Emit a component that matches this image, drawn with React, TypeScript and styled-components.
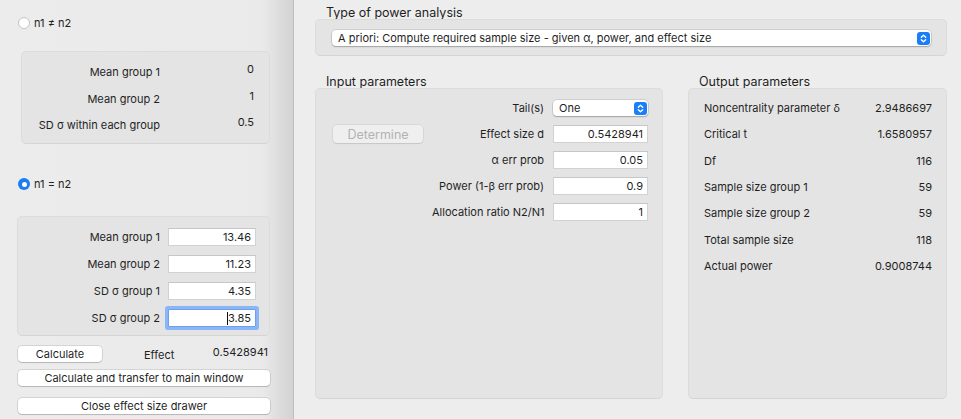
import React from "react";
import styled, { createGlobalStyle, css } from "styled-components";

const GlobalStyle = createGlobalStyle`
  html, body { margin: 0; padding: 0; }
  body {
    background: #ededed;
    font-family: Inter, "Liberation Sans", sans-serif;
    font-size: 11px;
    color: #1f1f1f;
  }
  * { box-sizing: border-box; }
`;

const Window = styled.div`
  display: flex;
  width: 961px;
  height: 419px;
  overflow: hidden;
  background: #ededed;
`;

const Drawer = styled.div`
  width: 294px;
  flex: none;
  border-right: 1px solid #bdbdbd;
  background: linear-gradient(to right, #ececec 0, #eaeaea 262px, #d2d2d2 293px);
  display: flex;
  flex-direction: column;
  padding: 16px 0 0 17px;
`;

const RadioRow = styled.div<{ $mt: number }>`
  display: flex;
  align-items: center;
  gap: 4px;
  height: 14px;
  margin-top: ${(p) => p.$mt}px;
  margin-left: 1px;
`;

const RadioDot = styled.span<{ $on?: boolean }>`
  width: 12px;
  height: 12px;
  border-radius: 50%;
  flex: none;
  display: flex;
  align-items: center;
  justify-content: center;
  background: ${(p) => (p.$on ? "#1b7cf5" : "#fff")};
  border: ${(p) => (p.$on ? "none" : "1px solid #c4c4c4")};
  &::after {
    content: "";
    width: 5px;
    height: 5px;
    border-radius: 50%;
    background: #fff;
    display: ${(p) => (p.$on ? "block" : "none")};
  }
`;

const GroupBox = styled.div`
  background: #e4e4e4;
  border: 1px solid #dcdcdc;
  border-bottom-color: #d4d4d4;
  border-radius: 5px;
`;

const StaticBox = styled(GroupBox)`
  margin-top: 21px;
  margin-left: 4px;
  width: 249px;
  height: 93px;
  display: grid;
  grid-template-columns: 138px 1fr;
  grid-auto-rows: 26.5px;
  align-items: center;
  padding: 7px 15px 0 0;
`;

const Label = styled.div`
  text-align: right;
  white-space: nowrap;
`;

const RaisedValue = styled.div`
  text-align: right;
  margin-bottom: 6px;
`;

const InputBox = styled(GroupBox)`
  margin-top: 25px;
  width: 253px;
  height: 120px;
  display: grid;
  grid-template-columns: 142px 88px;
  column-gap: 8px;
  grid-auto-rows: 18px;
  row-gap: 9px;
  align-items: center;
  padding: 11px 14px 0 0;
`;

const Field = styled.div<{ $focus?: boolean }>`
  height: 18px;
  background: #fff;
  border: 1px solid #d2d2d2;
  border-top-color: #c6c6c6;
  display: flex;
  align-items: center;
  justify-content: flex-end;
  padding: 0 4px;
  ${(p) =>
    p.$focus &&
    css`
      border-color: #6c9ff0;
      border-radius: 1px;
      box-shadow: 0 0 0 3px #8ab5f6;
    `}
`;

const Caret = styled.span`
  width: 1px;
  height: 13px;
  background: #111;
`;

const ActionRow = styled.div`
  display: flex;
  align-items: center;
  margin-top: 10px;
  margin-left: 1px;
  width: 250px;
`;

const PushButton = styled.div<{ $w?: number }>`
  width: ${(p) => (p.$w ? `${p.$w}px` : "252px")};
  height: 16px;
  flex: none;
  background: #fff;
  border-radius: 4px;
  box-shadow: 0 0 0 0.5px rgba(0, 0, 0, 0.2), 0 1px 1px rgba(0, 0, 0, 0.14);
  display: flex;
  align-items: center;
  justify-content: center;
  line-height: 16px;
`;

const WideButton = styled(PushButton)<{ $mt: number }>`
  margin-top: ${(p) => p.$mt}px;
  margin-left: 1px;
`;

const EffectLabel = styled.span`
  margin-left: 42px;
  margin-top: 2px;
`;

const EffectValue = styled.span`
  margin-left: auto;
  margin-top: -4px;
`;

const Main = styled.div`
  flex: 1;
  display: flex;
  flex-direction: column;
  padding: 4px 14px 0 21px;
`;

const Heading = styled.div`
  font-size: 12.5px;
  line-height: 15px;
  height: 15px;
  margin-left: 11px;
  padding-top: 1px;
`;

const TypeBox = styled(GroupBox)`
  height: 37px;
  padding: 10px 15px 0 16px;
`;

const Select = styled.div<{ $h?: number }>`
  height: ${(p) => p.$h ?? 16}px;
  background: #fff;
  border-radius: 4px;
  box-shadow: 0 0 0 0.5px rgba(0, 0, 0, 0.18), 0 1px 1.5px rgba(0, 0, 0, 0.22);
  display: flex;
  align-items: center;
  justify-content: space-between;
  padding: 0 1px 0 6px;
`;

const PanelsRow = styled.div`
  display: flex;
  gap: 25px;
  margin-top: 17px;
`;

const Column = styled.div<{ $w: number }>`
  width: ${(p) => p.$w}px;
  display: flex;
  flex-direction: column;
`;

const ParamBox = styled(GroupBox)`
  height: 311px;
  display: grid;
  grid-template-columns: 90px 112px 95px;
  column-gap: 9px;
  grid-auto-rows: 18px;
  row-gap: 8px;
  align-items: center;
  align-content: start;
  padding: 10px 15px 0 17px;
`;

const DetermineButton = styled.div`
  height: 18px;
  background: #efefef;
  border-radius: 4px;
  box-shadow: 0 0 0 0.5px rgba(0, 0, 0, 0.1), 0 1px 1px rgba(0, 0, 0, 0.08);
  color: #b3b3b3;
  font-size: 12.5px;
  display: flex;
  align-items: center;
  justify-content: center;
`;

const OutputBox = styled(GroupBox)`
  height: 311px;
  padding: 6px 14px 0 15px;
  display: flex;
  flex-direction: column;
`;

const OutRow = styled.div`
  height: 26.3px;
  display: flex;
  align-items: center;
  justify-content: space-between;
`;

const Stepper = () => (
  <svg width="13" height="13" viewBox="0 0 13 13">
    <rect x="0" y="0" width="13" height="13" rx="3" fill="#1c7ef6" />
    <path d="M4.3 5.3 L6.5 3.2 L8.7 5.3" fill="none" stroke="#fff" strokeWidth="1.3" strokeLinecap="round" strokeLinejoin="round" />
    <path d="M4.3 7.7 L6.5 9.8 L8.7 7.7" fill="none" stroke="#fff" strokeWidth="1.3" strokeLinecap="round" strokeLinejoin="round" />
  </svg>
);

const staticRows = [
  ["Mean group 1", "0"],
  ["Mean group 2", "1"],
  ["SD σ within each group", "0.5"],
];

const inputRows = [
  ["Mean group 1", "13.46"],
  ["Mean group 2", "11.23"],
  ["SD σ group 1", "4.35"],
];

const outputs = [
  ["Noncentrality parameter δ", "2.9486697"],
  ["Critical t", "1.6580957"],
  ["Df", "116"],
  ["Sample size group 1", "59"],
  ["Sample size group 2", "59"],
  ["Total sample size", "118"],
  ["Actual power", "0.9008744"],
];

const params = [
  ["α err prob", "0.05"],
  ["Power (1-β err prob)", "0.9"],
  ["Allocation ratio N2/N1", "1"],
];

export default function App() {
  return (
    <>
      <GlobalStyle />
      <Window>
        <Drawer>
          <RadioRow $mt={0}>
            <RadioDot />
            <span>n1 ≠ n2</span>
          </RadioRow>
          <StaticBox>
            {staticRows.map(([l, v]) => (
              <React.Fragment key={l}>
                <Label>{l}</Label>
                <RaisedValue>{v}</RaisedValue>
              </React.Fragment>
            ))}
          </StaticBox>
          <RadioRow $mt={33}>
            <RadioDot $on />
            <span>n1 = n2</span>
          </RadioRow>
          <InputBox>
            {inputRows.map(([l, v]) => (
              <React.Fragment key={l}>
                <Label>{l}</Label>
                <Field>{v}</Field>
              </React.Fragment>
            ))}
            <Label>SD σ group 2</Label>
            <Field $focus>
              <Caret />
              3.85
            </Field>
          </InputBox>
          <ActionRow>
            <PushButton $w={84}>Calculate</PushButton>
            <EffectLabel>Effect</EffectLabel>
            <EffectValue>0.5428941</EffectValue>
          </ActionRow>
          <WideButton $mt={8}>Calculate and transfer to main window</WideButton>
          <WideButton $mt={12}>Close effect size drawer</WideButton>
        </Drawer>
        <Main>
          <Heading>Type of power analysis</Heading>
          <TypeBox>
            <Select>
              <span>A priori: Compute required sample size - given α, power, and effect size</span>
              <Stepper />
            </Select>
          </TypeBox>
          <PanelsRow>
            <Column $w={348}>
              <Heading>Input parameters</Heading>
              <ParamBox>
                <span />
                <Label>Tail(s)</Label>
                <Select>
                  <span>One</span>
                  <Stepper />
                </Select>
                <DetermineButton>Determine</DetermineButton>
                <Label>Effect size d</Label>
                <Field>0.5428941</Field>
                {params.map(([l, v]) => (
                  <React.Fragment key={l}>
                    <span />
                    <Label>{l}</Label>
                    <Field>{v}</Field>
                  </React.Fragment>
                ))}
              </ParamBox>
            </Column>
            <Column $w={259}>
              <Heading>Output parameters</Heading>
              <OutputBox>
                {outputs.map(([l, v]) => (
                  <OutRow key={l}>
                    <span>{l}</span>
                    <span>{v}</span>
                  </OutRow>
                ))}
              </OutputBox>
            </Column>
          </PanelsRow>
        </Main>
      </Window>
    </>
  );
}
